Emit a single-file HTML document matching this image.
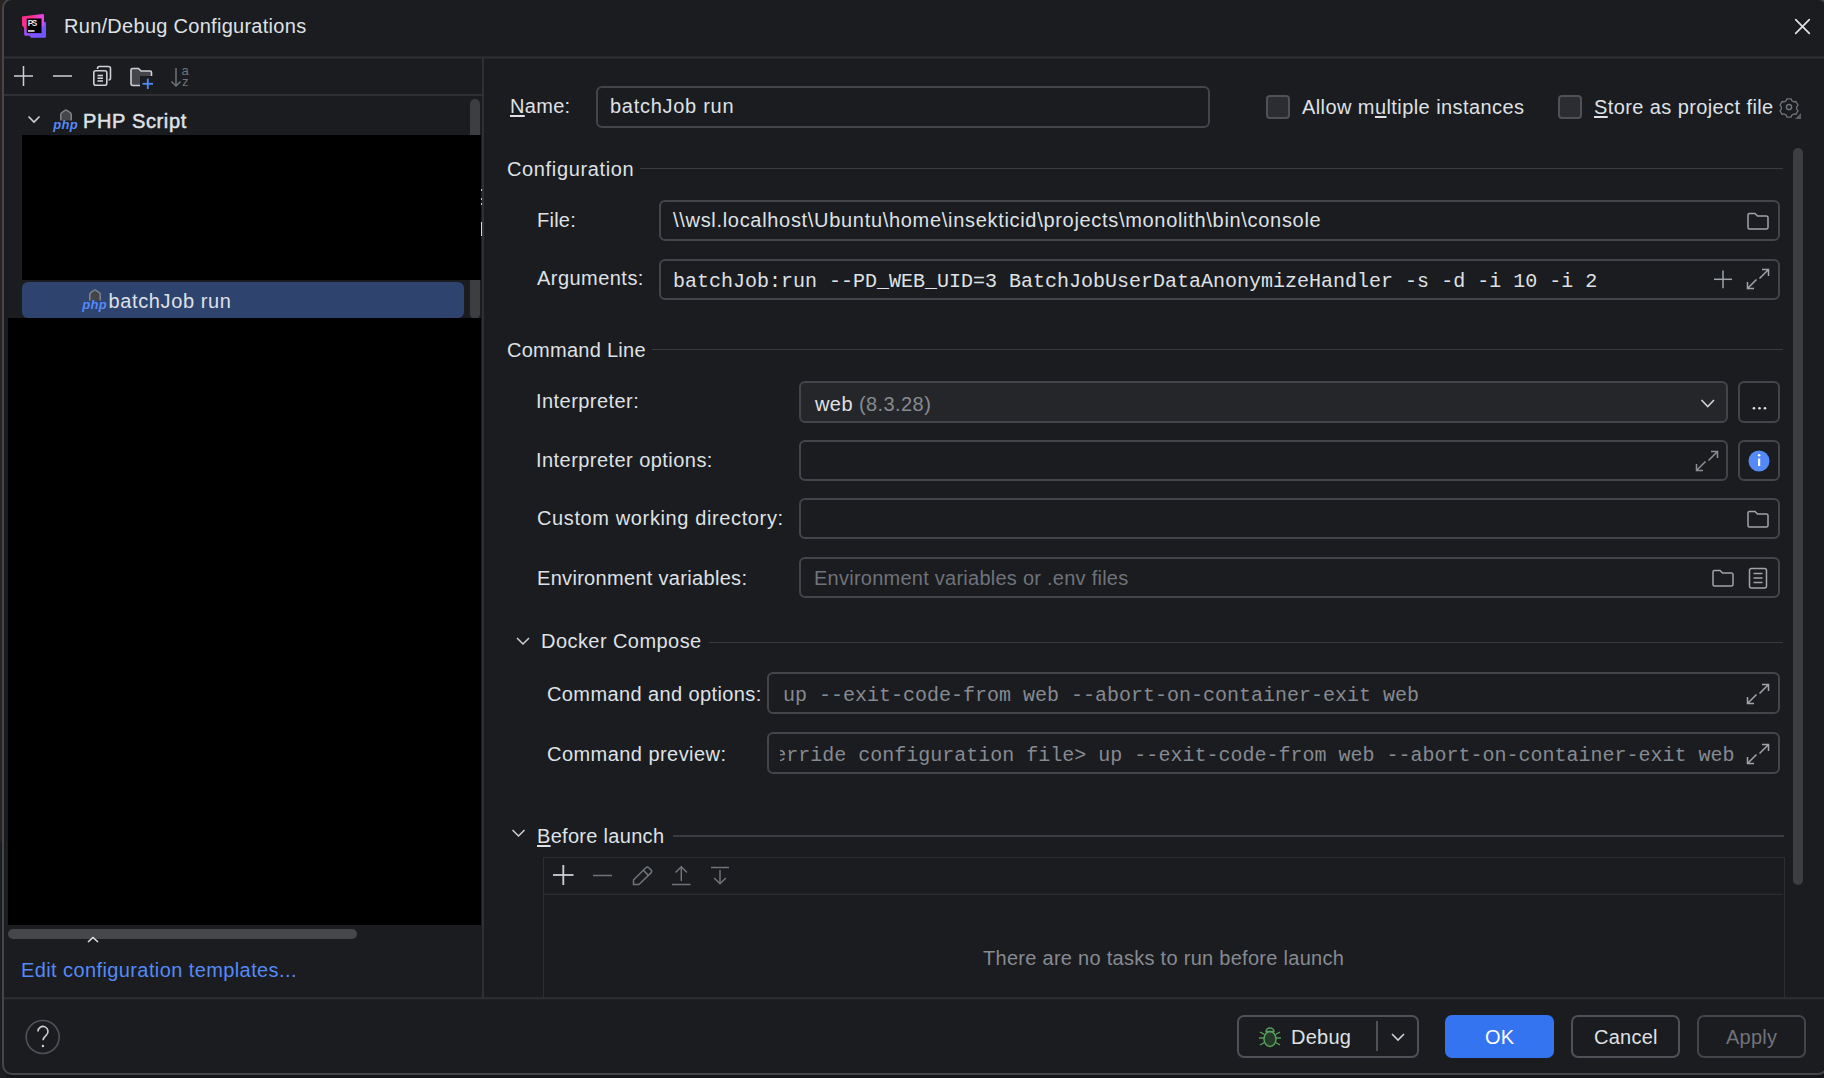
<!DOCTYPE html>
<html><head><meta charset="utf-8">
<style>
*{margin:0;padding:0;box-sizing:border-box}
html,body{width:1824px;height:1078px;overflow:hidden}
body{background:#151618;position:relative;font-family:"Liberation Sans",sans-serif}
.abs{position:absolute}
.t{position:absolute;font-size:20px;line-height:20px;white-space:pre;color:#dfe1e5;letter-spacing:.25px}
.m{position:absolute;font-family:"Liberation Mono",monospace;font-size:20px;line-height:20px;white-space:pre;color:#dfe1e5}
.g{color:#868a91}
.fld{position:absolute;border:2px solid #43454a;border-radius:6px}
.u{text-decoration:underline;text-underline-offset:1.5px;text-decoration-thickness:2px}
.btn{position:absolute;border:2px solid #4e5157;border-radius:7px}
</style></head><body>
<!-- outside left strip -->
<div class="abs" style="left:0;top:0;width:6px;height:841px;background:#2a2321"></div>
<div class="abs" style="left:0;top:841px;width:6px;height:237px;background:#1c1d20"></div>
<!-- dialog -->
<div class="abs" style="left:2px;top:-2px;width:1826px;height:1077px;background:#1b1c1f;border:2px solid #45464a;border-radius:10px"></div>

<!-- title -->
<div class="t" id="title" style="left:64px;top:16px;letter-spacing:.28px">Run/Debug Configurations</div>

<!-- left tree -->
<div class="t" style="left:83px;top:111px;letter-spacing:.65px;-webkit-text-stroke:.5px #dfe1e5">PHP Script</div>
<div class="abs" style="left:470px;top:99px;width:10px;height:220px;background:#3c3e42;border-radius:5px"></div>
<div class="abs" style="left:22px;top:135px;width:459px;height:145px;background:#000"></div>
<div class="abs" style="left:22px;top:282px;width:442px;height:36px;background:#2e436e;border-radius:6px"></div>
<div class="t" style="left:108.5px;top:291px;letter-spacing:.62px">batchJob run</div>
<div class="abs" style="left:8px;top:318px;width:473px;height:607px;background:#000"></div>
<div class="abs" style="left:8px;top:929px;width:349px;height:10px;background:#45474b;border-radius:5px"></div>
<div class="abs" style="left:481px;top:189px;width:1.5px;height:2px;background:#c9cdd6"></div>
<div class="abs" style="left:481px;top:198px;width:1.5px;height:2px;background:#c9cdd6"></div>
<div class="abs" style="left:481px;top:202.5px;width:1.5px;height:2px;background:#c9cdd6"></div>
<div class="abs" style="left:481px;top:222px;width:1.5px;height:14px;background:#dedcc0"></div>
<svg class="abs" style="left:86px;top:935px" width="16" height="10"><path d="M2 7 L7 2.5 L12 7" stroke="#dfe1e5" stroke-width="1.6" fill="none"/></svg>
<div class="t" style="left:21px;top:960px;color:#548af7;letter-spacing:.4px">Edit configuration templates...</div>

<!-- right: name row -->
<div class="t" style="left:510px;top:96px;letter-spacing:.3px"><span class="u">N</span>ame:</div>
<div class="fld" style="left:596px;top:86px;width:614px;height:42px"></div>
<div class="t" style="left:610px;top:96px;letter-spacing:.72px">batchJob run</div>
<div class="abs" style="left:1266px;top:95px;width:24px;height:24px;background:#2b2d30;border:2px solid #4e5157;border-radius:4px"></div>
<div class="t" style="left:1302px;top:97px;letter-spacing:.42px">Allow m<span class="u">u</span>ltiple instances</div>
<div class="abs" style="left:1558px;top:95px;width:24px;height:24px;background:#2b2d30;border:2px solid #4e5157;border-radius:4px"></div>
<div class="t" style="left:1594px;top:97px;letter-spacing:.4px"><span class="u">S</span>tore as project file</div>

<div class="abs" style="left:1793px;top:148px;width:10px;height:737px;background:#3c3e42;border-radius:5px"></div>

<!-- Configuration -->
<div class="t" style="left:507px;top:159px;letter-spacing:.64px">Configuration</div>
<div class="t" style="left:537px;top:210px">File:</div>
<div class="fld" style="left:659px;top:200px;width:1121px;height:41px"></div>
<div class="t" style="left:673px;top:210px;letter-spacing:.69px">\\wsl.localhost\Ubuntu\home\insekticid\projects\monolith\bin\console</div>
<div class="t" style="left:537px;top:268px;letter-spacing:.46px">Arguments:</div>
<div class="fld" style="left:659px;top:259px;width:1121px;height:41px"></div>
<div class="m" style="left:673px;top:272px">batchJob:run --PD_WEB_UID=3 BatchJobUserDataAnonymizeHandler -s -d -i 10 -i 2</div>

<!-- Command Line -->
<div class="t" style="left:507px;top:340px;letter-spacing:.27px">Command Line</div>
<div class="t" style="left:536px;top:391px;letter-spacing:.45px">Interpreter:</div>
<div class="fld" style="left:799px;top:381px;width:929px;height:42px;background:#25262a"></div>
<div class="t" style="left:815px;top:393.5px;letter-spacing:.42px">web <span class="g">(8.3.28)</span></div>
<div class="btn" style="left:1738px;top:381px;width:42px;height:42px;border-color:#43454a;border-radius:6px"></div>
<div class="t" style="left:536px;top:450px;letter-spacing:.45px">Interpreter options:</div>
<div class="fld" style="left:799px;top:440px;width:929px;height:41px"></div>
<div class="btn" style="left:1738px;top:440px;width:42px;height:41px;border-color:#43454a;border-radius:6px"></div>
<div class="t" style="left:537px;top:508px;letter-spacing:.62px">Custom working directory:</div>
<div class="fld" style="left:799px;top:498px;width:981px;height:41px"></div>
<div class="t" style="left:537px;top:568px;letter-spacing:.31px">Environment variables:</div>
<div class="fld" style="left:799px;top:557px;width:981px;height:41px"></div>
<div class="t" style="left:814px;top:568px;color:#6f737a">Environment variables or .env files</div>

<!-- Docker Compose -->
<div class="t" style="left:541px;top:631px;letter-spacing:.44px">Docker Compose</div>
<div class="t" style="left:547px;top:684px;letter-spacing:.39px">Command and options:</div>
<div class="fld" style="left:767px;top:672px;width:1013px;height:42px"></div>
<div class="m g" style="left:783px;top:686px">up --exit-code-from web --abort-on-container-exit web</div>
<div class="t" style="left:547px;top:744px;letter-spacing:.45px">Command preview:</div>
<div class="fld" style="left:767px;top:732px;width:1013px;height:42px;overflow:hidden"></div>
<div class="abs" style="left:780px;top:735px;width:955px;height:36px;overflow:hidden">
  <div class="m g" style="left:-5.7px;top:11px">erride configuration file&gt; up --exit-code-from web --abort-on-container-exit web</div>
</div>

<!-- Before launch -->
<div class="t" style="left:537px;top:826px;letter-spacing:.3px"><span class="u">B</span>efore launch</div>
<div class="abs" style="left:543px;top:857px;width:1242px;height:141px;border:1.5px solid #2b2d30;border-bottom:none"></div>
<div class="t" style="left:983px;top:948px;color:#868a91;letter-spacing:.28px">There are no tasks to run before launch</div>

<!-- bottom -->
<div class="btn" style="left:1237px;top:1015px;width:182px;height:43px"></div>
<div class="t" style="left:1291px;top:1027px">Debug</div>
<div class="abs" style="left:1445px;top:1015px;width:109px;height:43px;background:#3574f0;border-radius:7px"></div>
<div class="t" style="left:1485px;top:1027px;color:#fff">OK</div>
<div class="btn" style="left:1571px;top:1015px;width:109px;height:43px"></div>
<div class="t" style="left:1594px;top:1027px">Cancel</div>
<div class="btn" style="left:1697px;top:1015px;width:109px;height:43px;border-color:#43454a"></div>
<div class="t" style="left:1726px;top:1027px;color:#6f737a">Apply</div>

<!-- lines and icons overlay -->
<svg class="abs" style="left:0;top:0" width="1824" height="1078" viewBox="0 0 1824 1078" fill="none">
  <!-- separators -->
  <g stroke="#2e3034" stroke-width="2">
    <line x1="4" y1="57.5" x2="1824" y2="57.5"/>
    <line x1="4" y1="95" x2="482" y2="95"/>
    <line x1="483" y1="58" x2="483" y2="998"/>
    <line x1="4" y1="998.2" x2="1824" y2="998.2"/>
  </g>
  <line x1="544" y1="894.3" x2="1783" y2="894.3" stroke="#2b2d30" stroke-width="1.3"/>
  <g stroke="#393b40" stroke-width="1.2">
    <line x1="640" y1="168.5" x2="1783" y2="168.5"/>
    <line x1="652" y1="349.5" x2="1783" y2="349.5"/>
    <line x1="709" y1="642.5" x2="1783" y2="642.5"/>
  </g>
  <line x1="673" y1="836" x2="1784" y2="836" stroke="#393b40" stroke-width="2"/>
  <!-- close -->
  <g stroke="#dfe1e5" stroke-width="1.7" stroke-linecap="round">
    <line x1="1795.7" y1="19.7" x2="1809.3" y2="33.3"/><line x1="1809.3" y1="19.7" x2="1795.7" y2="33.3"/>
  </g>
  <!-- PS logo -->
  <defs>
    <linearGradient id="psg" x1="0" y1="0" x2="1" y2="1">
      <stop offset="0" stop-color="#ff318c"/><stop offset="0.55" stop-color="#d63cf5"/><stop offset="1" stop-color="#6b57ff"/>
    </linearGradient>
  </defs>
  <defs>
    <linearGradient id="psp" x1="0" y1="0" x2="1" y2="0"><stop offset="0" stop-color="#ff2d8e"/><stop offset="0.45" stop-color="#ff318c"/><stop offset="1" stop-color="#e046f5"/></linearGradient>
    <linearGradient id="psq" x1="0" y1="0" x2="1" y2="0.3"><stop offset="0" stop-color="#d448ff"/><stop offset="0.45" stop-color="#8a52ff"/><stop offset="1" stop-color="#6e57ff"/></linearGradient>
  </defs>
  <path d="M24.2 27 V34.3 Q24.2 35.8 25.7 35.8 H29.6 L31 37.8 H44.6 Q46 37.8 46 36.4 V23.2 Q46 21.8 44.6 21.8 H30 Z" fill="url(#psq)"/>
  <path d="M22 16.4 L42.6 13.9 Q44 13.8 44 15.2 V26 L30 28.6 L25.6 29.6 L22 25.2 Z" fill="url(#psp)"/>
  <rect x="26.7" y="18.5" width="14.8" height="14.6" fill="#000"/>
  <text x="27.7" y="26.1" font-family="Liberation Sans" font-weight="bold" font-size="8.2" textLength="9.6" fill="#e6e6e6">PS</text>
  <rect x="28" y="30.1" width="6.5" height="1.7" fill="#d8d8d8"/>

  <!-- left toolbar -->
  <g stroke="#ced0d6" stroke-width="1.5" stroke-linecap="butt">
    <line x1="14" y1="76" x2="33" y2="76"/><line x1="23.5" y1="66" x2="23.5" y2="86"/>
    <line x1="53" y1="76" x2="72" y2="76"/>
  </g>
  <g stroke="#ced0d6" stroke-width="1.6" fill="none">
    <path d="M97.5 69 V68.5 a2 2 0 0 1 2 -2 h9 a2 2 0 0 1 2 2 V78 a2 2 0 0 1 -2 2"/>
    <rect x="93.8" y="70.8" width="13" height="14.5" rx="2"/>
    <line x1="97.5" y1="75.5" x2="103" y2="75.5"/><line x1="97.5" y1="78.2" x2="103" y2="78.2"/><line x1="97.5" y1="81" x2="103" y2="81"/>
  </g>
  <path d="M131 70 a1.5 1.5 0 0 1 1.5 -1.5 h6 l2.5 2.5 h9 a1.5 1.5 0 0 1 1.5 1.5 v11 a2 2 0 0 1 -2 2 h-16.5 a2 2 0 0 1 -2 -2 z" fill="#43454a" stroke="#ced0d6" stroke-width="1.6"/>
  <rect x="140" y="76" width="14" height="14" fill="#1b1c1f"/>
  <g stroke="#548af7" stroke-width="1.8"><line x1="142.5" y1="83.8" x2="153" y2="83.8"/><line x1="147.8" y1="78.7" x2="147.8" y2="89"/></g>
  <g stroke="#6f737a" stroke-width="1.5" fill="none">
    <line x1="176" y1="68" x2="176" y2="86"/><path d="M171.5 81.5 L176 86 L180.5 81.5"/>
  </g>
  <text x="181.5" y="75.3" font-family="Liberation Sans" font-size="13" fill="#6f737a">a</text>
  <text x="182" y="86.3" font-family="Liberation Sans" font-size="13" fill="#6f737a">z</text>

  <!-- tree chevron -->
  <path d="M28.5 116.5 L34 122 L39.5 116.5" stroke="#ced0d6" stroke-width="1.6"/>
  <!-- php icons -->
  <g id="phpi">
    <path d="M60.8 120.5 V114.5 Q60.8 113.5 61.6 112.8 L65.2 110.2 Q66 109.6 66.8 110.2 L70.4 112.8 Q71.2 113.5 71.2 114.5 V120.5" fill="#43454a" stroke="#868a91" stroke-width="1.4"/>
    <text x="53.2" y="129.2" font-family="Liberation Sans" font-weight="bold" font-style="italic" font-size="13" textLength="24.5" fill="#548af7">php</text>
  </g>
  <use href="#phpi" x="29" y="180"/>

  <!-- checkbox gear -->
  <g stroke="#6f737a" stroke-width="1.5" fill="none">
    <circle cx="1789" cy="107" r="2.6"/>
    <path transform="translate(1789 107) scale(0.86) translate(-1789.5 -107)" d="M1787 97.5 h5 l0.8 2.3 l2.3 1.3 l2.4 -0.5 l2.5 4.3 l-1.6 1.9 v2.6 l1.6 1.9 l-2.5 4.3 l-2.4 -0.5 l-2.3 1.3 l-0.8 2.3 h-5 l-0.8 -2.3 l-2.3 -1.3 l-2.4 0.5 l-2.5 -4.3 l1.6 -1.9 v-2.6 l-1.6 -1.9 l2.5 -4.3 l2.4 0.5 l2.3 -1.3 z" stroke-linejoin="round"/>
  </g>
  <path d="M1801 113 V119 H1795 Z" fill="#5a5d63"/>

  <!-- field icons -->
  <g stroke="#a0a3aa" stroke-width="1.5" fill="none" id="fold">
    <path d="M1748 215 a1.5 1.5 0 0 1 1.5 -1.5 h5.5 l2.5 2.5 h9 a1.5 1.5 0 0 1 1.5 1.5 v10 a1.5 1.5 0 0 1 -1.5 1.5 h-17 a1.5 1.5 0 0 1 -1.5 -1.5 z"/>
  </g>
  <use href="#fold" x="0" y="298"/>
  <use href="#fold" x="-35" y="357"/>
  <!-- plus in args -->
  <g stroke="#a0a3aa" stroke-width="1.5">
    <line x1="1714" y1="279.3" x2="1732" y2="279.3"/><line x1="1723" y1="270.4" x2="1723" y2="288.2"/>
  </g>
  <!-- expand icons -->
  <g stroke="#a0a3aa" stroke-width="1.5" fill="none" id="exp">
    <path d="M1759.5 278.5 L1768.5 269.5 M1762 269.5 H1768.5 V276"/>
    <path d="M1756.5 279.5 L1747.5 288.5 M1747.5 282 V288.5 H1754"/>
  </g>
  <g stroke="#8c8f95" stroke-width="1.5" fill="none" transform="translate(-51 182)">
    <path d="M1759.5 278.5 L1768.5 269.5 M1762 269.5 H1768.5 V276"/>
    <path d="M1756.5 279.5 L1747.5 288.5 M1747.5 282 V288.5 H1754"/>
  </g>
  <use href="#exp" x="0" y="415"/>
  <use href="#exp" x="0" y="475"/>
  <!-- combo chevron -->
  <path d="M1701.5 400 L1707.75 406.5 L1714 400" stroke="#ced0d6" stroke-width="1.6"/>
  <!-- dots -->
  <g fill="#dfe1e5"><circle cx="1754" cy="408.3" r="1.3"/><circle cx="1759.5" cy="408.3" r="1.3"/><circle cx="1765" cy="408.3" r="1.3"/></g>
  <!-- info -->
  <circle cx="1759" cy="461" r="10.5" fill="#548af7"/>
  <rect x="1758" y="458.5" width="2.2" height="7.5" fill="#fff"/><circle cx="1759.1" cy="455.2" r="1.3" fill="#fff"/>
  <!-- doc icon -->
  <g stroke="#a0a3aa" stroke-width="1.5" fill="none">
    <rect x="1749.5" y="568.5" width="17" height="19.5" rx="2"/>
    <line x1="1753.5" y1="573.5" x2="1762.5" y2="573.5"/><line x1="1753.5" y1="578" x2="1762.5" y2="578"/><line x1="1753.5" y1="582.5" x2="1762.5" y2="582.5"/>
  </g>
  <!-- section chevrons -->
  <path d="M517 638 L523 644 L529 638" stroke="#ced0d6" stroke-width="1.5"/>
  <path d="M512.5 830 L518.5 836 L524.5 830" stroke="#ced0d6" stroke-width="1.5"/>
  <!-- before launch toolbar -->
  <g stroke="#ced0d6" stroke-width="1.8">
    <line x1="553" y1="875" x2="573.5" y2="875"/><line x1="563.3" y1="865" x2="563.3" y2="885"/>
  </g>
  <g stroke="#6f737a" stroke-width="1.5" fill="none">
    <line x1="593" y1="875.5" x2="612" y2="875.5"/>
    <path d="M633.5 884.5 V880 L645.8 867.7 Q647.3 866.2 648.8 867.7 L651 869.9 Q652.5 871.4 651 872.9 L638.9 884.5 Z"/><line x1="643.3" y1="870.3" x2="648.4" y2="875.4"/>
    <line x1="672" y1="884.5" x2="690.5" y2="884.5"/><line x1="681.3" y1="867" x2="681.3" y2="881"/><path d="M675.5 872.5 L681.3 866.7 L687 872.5"/>
    <line x1="711" y1="867.5" x2="729" y2="867.5"/><line x1="720" y1="870" x2="720" y2="884"/><path d="M714.2 878 L720 883.8 L725.8 878"/>
  </g>
  <!-- help -->
  <circle cx="42.7" cy="1037" r="16.5" stroke="#4e5157" stroke-width="1.6"/>
  <path d="M38 1031.5 a5 5 0 1 1 8.3 3.7 c-1.8 1.6 -3.2 2.4 -3.2 5" stroke="#ced0d6" stroke-width="1.6" fill="none"/>
  <circle cx="42.9" cy="1046" r="1.2" fill="#ced0d6"/>
  <!-- debug bug -->
  <g stroke="#57a35d" stroke-width="1.4">
    <ellipse cx="1270" cy="1039" rx="6" ry="7.5" fill="#253a29"/>
    <path d="M1266 1031.5 a4 3.5 0 0 1 8 0 z" fill="none"/>
    <line x1="1259" y1="1038" x2="1264" y2="1038"/><line x1="1276" y1="1038" x2="1281" y2="1038"/>
    <line x1="1260" y1="1032" x2="1264.5" y2="1034.5"/><line x1="1280" y1="1032" x2="1275.5" y2="1034.5"/>
    <line x1="1260" y1="1045" x2="1264.5" y2="1042.5"/><line x1="1280" y1="1045" x2="1275.5" y2="1042.5"/>
  </g>
  <line x1="1377" y1="1021" x2="1377" y2="1051" stroke="#4e5157" stroke-width="2"/>
  <path d="M1392 1034 L1398 1040 L1404 1034" stroke="#ced0d6" stroke-width="1.6"/>
</svg>
</body></html>
